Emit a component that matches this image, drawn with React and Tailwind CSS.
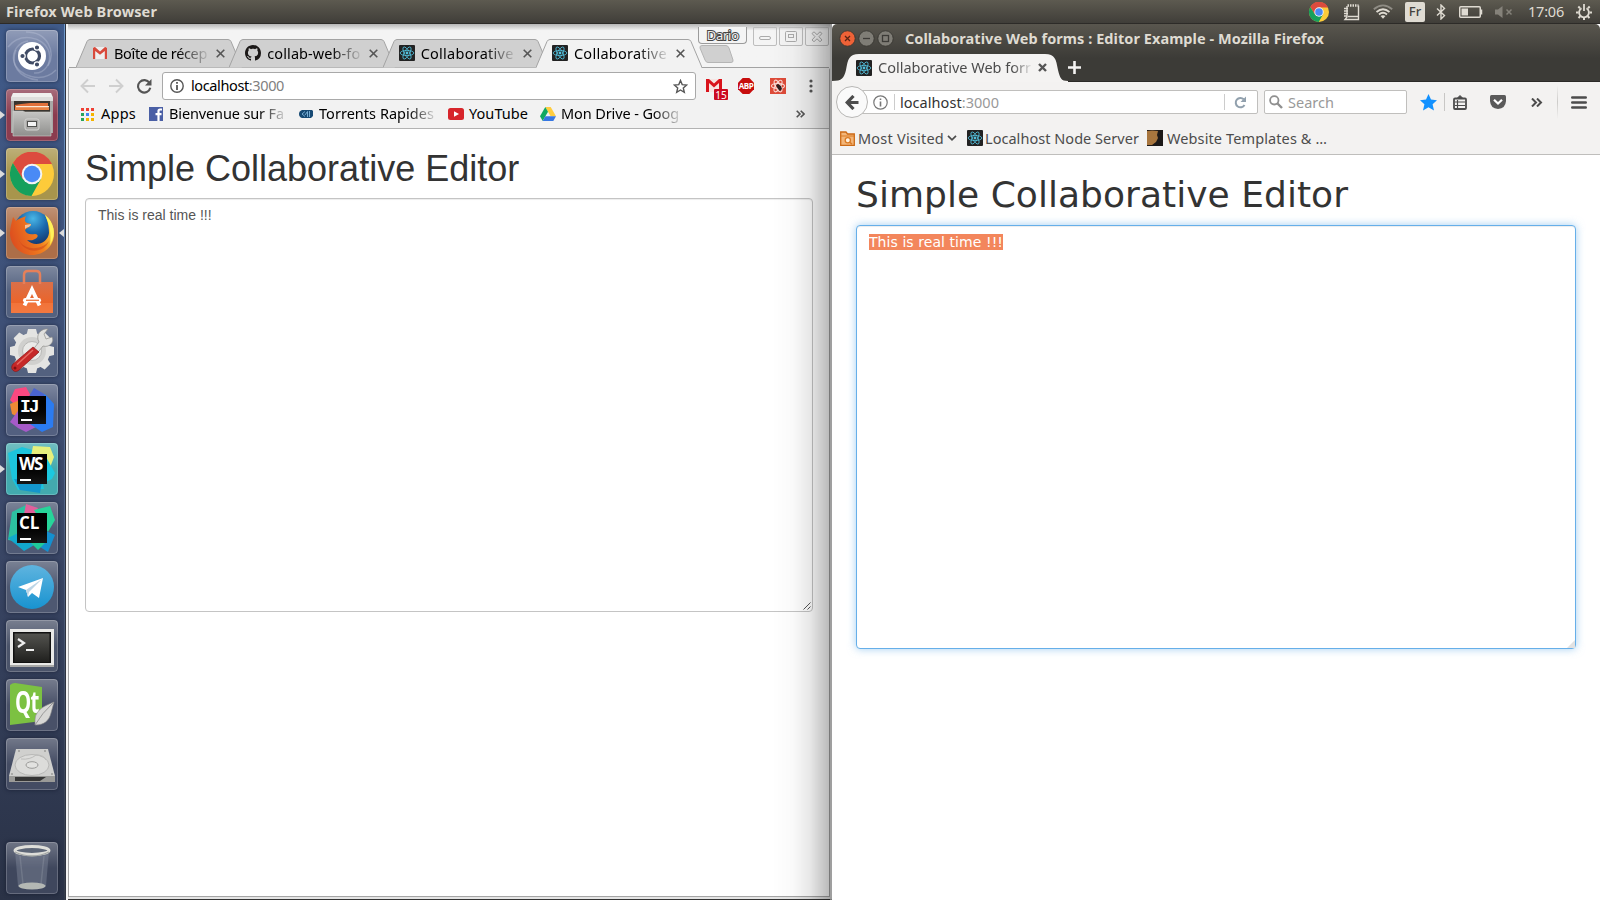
import { useLayoutEffect, useRef } from "react";

// Single line of text whose letter spacing is computed so that it fills `w` pixels.
function Fit({ w, className = "", children }) {
  const ref = useRef(null);
  useLayoutEffect(() => {
    const el = ref.current;
    el.style.letterSpacing = "0px";
    const n = el.textContent.length;
    const natural = el.getBoundingClientRect().width;
    el.style.letterSpacing = (w - natural) / n + "px";
  }, [w]);
  return (
    <span ref={ref} className={"inline-block shrink-0 whitespace-pre " + className}>
      {children}
    </span>
  );
}

function ReactLogo() {
  return (
    <svg width="16" height="16" viewBox="0 0 16 16" className="shrink-0">
      <rect width="16" height="16" rx="1" fill="#222" />
      <g fill="none" stroke="#53c1de" strokeWidth="0.8">
        <ellipse cx="8" cy="8" rx="6.8" ry="2.6" />
        <ellipse cx="8" cy="8" rx="6.8" ry="2.6" transform="rotate(60 8 8)" />
        <ellipse cx="8" cy="8" rx="6.8" ry="2.6" transform="rotate(120 8 8)" />
      </g>
      <circle cx="8" cy="8" r="1.4" fill="#53c1de" />
    </svg>
  );
}

function ChromeLogo({ size }) {
  return (
    <svg width={size} height={size} viewBox="0 0 44 44" className="shrink-0">
      <circle cx="22" cy="22" r="22" fill="#fdcb3a" />
      <path d="M2.9 11A22 22 0 0 1 42 12H22L12.5 27Z" fill="#dc4b3e" />
      <path d="M2.9 11A22 22 0 0 0 21.500 44L31 27L22 31L12.800 27Z" fill="#16a05c" />
      <circle cx="22" cy="22" r="10.300" fill="#f4f4f4" />
      <circle cx="22" cy="22" r="8.300" fill="#4a8af5" />
    </svg>
  );
}

/* ---------- launcher ---------- */

function DashArt() {
  return (
    <svg width="52" height="52" viewBox="0 0 52 52">
      <g fill="none" stroke="#c9d2e6" strokeOpacity=".3" strokeWidth="1.500">
        <path d="M2 17C14 2 38 6 43 22C46 34 38 44 28 43" />
        <path d="M50 40C36 54 12 46 8 32C5 20 14 12 22 11" />
        <path d="M20 2C42 2 50 22 42 36M32 50C12 48 4 34 10 20" />
      </g>
      <circle cx="26" cy="26" r="14" fill="#fff" />
      <circle cx="26.500" cy="26" r="7" fill="none" stroke="#404b64" strokeWidth="3.200" />
      <g fill="#404b64" stroke="#fff" strokeWidth="1.200">
        <circle cx="16.500" cy="26" r="2.700" />
        <circle cx="31" cy="17.500" r="2.700" />
        <circle cx="31" cy="34.500" r="2.700" />
      </g>
    </svg>
  );
}

function FilesArt() {
  return (
    <svg width="52" height="52" viewBox="0 0 52 52">
      <defs>
        <linearGradient id="fl" x2="0" y2="1">
          <stop stopColor="#c6c6c4" />
          <stop offset="1" stopColor="#8f8f8d" />
        </linearGradient>
      </defs>
      <path d="M7 4H45L47 8V44H5V8Z" fill="#a9a9a7" />
      <path d="M7 4H45L47 9H5Z" fill="#f0f0ee" />
      <rect x="5" y="8" width="42" height="4" fill="#dededc" />
      <rect x="8" y="12" width="36" height="11" fill="#39352f" />
      <path d="M15 15L24 14L42 14V21H9V16Z" fill="#e0703a" />
      <path d="M10 17H43V18.500H10Z" fill="#fbe9d6" />
      <path d="M9 18.500H43V21H9Z" fill="#e88345" />
      <path d="M7 22H17L19 23H45V47H7Z" fill="url(#fl)" stroke="#d0d0ce" strokeWidth=".6" />
      <rect x="19" y="30" width="14" height="11" rx="2" fill="#aaa9a7" stroke="#d4d4d2" />
      <rect x="21.500" y="32.500" width="9" height="5" fill="#f4f4f4" stroke="#50504e" />
    </svg>
  );
}

function ChromeArt() {
  return (
    <div className="flex h-[52px] w-[52px] items-center justify-center">
      <ChromeLogo size={44} />
    </div>
  );
}

function FirefoxArt() {
  return (
    <svg width="52" height="52" viewBox="0 0 52 52">
      <defs>
        <radialGradient id="ffb" cx=".5" cy=".2" r=".8">
          <stop stopColor="#49b6e6" />
          <stop offset=".45" stopColor="#1b69ad" />
          <stop offset="1" stopColor="#12285c" />
        </radialGradient>
        <linearGradient id="ffo" x1="0" x2="1" y1=".5" y2=".2">
          <stop stopColor="#dd4f1f" />
          <stop offset=".6" stopColor="#f1801f" />
          <stop offset="1" stopColor="#ffe53e" />
        </linearGradient>
      </defs>
      <circle cx="27" cy="23" r="19" fill="url(#ffb)" />
      <path d="M39 8C45 13 48 20 48 27C48 39 38 48 26 48C14 48 4 38 4 26C4 20 6 15 7 10L10 14C13 11 16 11 20 9C18 13 19 15 21 16L25 17C25 20 22 20 19 23C20 27 24 28 29 27C33 27 32 31 29 32C26 34 24 33 21 33C29 41 42 36 43 26C43 18 41 12 39 8Z" fill="url(#ffo)" />
      <path d="M12 31C16 43 34 45 43 34C38 47 18 48 12 31Z" fill="#c63a18" opacity=".45" />
      <path d="M39 8C48 15 51 27 44 38C46 27 43 16 39 8Z" fill="#fff15a" />
      <path d="M19 18L25 17C25 20 21 20 19 22Z" fill="#f3c49c" />
    </svg>
  );
}

function SoftwareArt() {
  return (
    <svg width="52" height="52" viewBox="0 0 52 52">
      <defs>
        <linearGradient id="bag" x2="0" y2="1">
          <stop stopColor="#d9704a" />
          <stop offset=".7" stopColor="#ec6428" />
          <stop offset="1" stopColor="#f0743c" />
        </linearGradient>
      </defs>
      <path d="M5 16H47V47H5Z" fill="url(#bag)" />
      <path d="M5 37H47V47H5Z" fill="#f47b42" opacity=".7" />
      <path d="M18 18V9Q18 5 22 5H30Q34 5 34 9V18" fill="none" stroke="#e5805a" strokeWidth="2.500" />
      <path d="M18.500 39.500L26 23.500L33.500 39.500" fill="none" stroke="#fff" strokeWidth="3.800" />
      <rect x="17" y="32" width="18" height="4.500" rx="2.200" fill="#fff" />
      <rect x="20" y="33.700" width="13" height="1.100" fill="#e8601f" />
    </svg>
  );
}

function SettingsArt() {
  return (
    <svg width="52" height="52" viewBox="0 0 52 52">
      <g fill="#e4e4e2">
        {[0, 45, 90, 135].map((a) => (
          <path key={a} d="M22 4H30L32 12V40L30 48H22L20 40V12Z" transform={"rotate(" + a + " 26 26)"} />
        ))}
        <circle cx="26" cy="26" r="18" />
      </g>
      <circle cx="26" cy="26" r="14" fill="#d0d0ce" />
      <circle cx="26" cy="26" r="9.500" fill="#eaeae8" stroke="#b8b8b6" />
      <path d="M25 27L33 17C29 10 35 3 42 4L38 9L40 14L46 12C49 17 43 23 37 21L29 31Z" fill="#e0e0de" stroke="#8f8f8d" strokeWidth=".7" />
      <path d="M27 22L33 27L13 45C9 49 3 44 7 39Z" fill="#c62828" stroke="#8e1414" strokeWidth=".7" />
      <path d="M27 25L11 39.500" stroke="#e66a62" strokeWidth="1.500" />
      <circle cx="9" cy="43" r="1.500" fill="#7f1010" />
    </svg>
  );
}

function IdeText({ children, box }) {
  return (
    <div className={"absolute bg-gradient-to-b from-black to-[#161616] " + box}>
      <span className="absolute left-[2px] top-[1px] whitespace-nowrap font-['Open_Sans',sans-serif] text-[17px] font-bold leading-[18px] text-white">{children}</span>
      <span className="absolute bottom-[3px] left-[3px] h-[2px] w-[11px] bg-white" />
    </div>
  );
}

function IntellijArt() {
  return (
    <>
      <svg width="52" height="52" viewBox="0 0 52 52">
        <path d="M9 5L20 3L26 14L14 26L4 16Z" fill="#fb4880" />
        <path d="M4 20L14 16V34L6 30Z" fill="#ee8a35" />
        <path d="M4 38L14 24L32 42L20 48L12 44Z" fill="#a65ac8" />
        <path d="M30 6L40 11L48 20L47 43L36 48L24 40L26 12Z" fill="#2b7bf0" />
        <path d="M28 4L38 10V26L22 14Z" fill="#4a63cf" />
      </svg>
      <IdeText box="left-[12px] top-[12px] h-[28px] w-[28px]">
        <span className="font-['Liberation_Mono',monospace] text-[18px] tracking-[-2px]">IJ</span>
      </IdeText>
    </>
  );
}

function WebstormArt() {
  return (
    <>
      <svg width="52" height="52" viewBox="0 0 52 52">
        <path d="M2 10L16 4L30 8L38 46L12 47L6 36Z" fill="#1cc4dc" />
        <path d="M27 3L44 4L48 14L42 30L24 18Z" fill="#e6f07c" />
        <path d="M40 14L49 30L46 36L38 40Z" fill="#1cc8e0" />
        <path d="M8 36L36 38L34 50L14 47Z" fill="#1496cc" />
      </svg>
      <IdeText box="left-[11px] top-[11px] h-[30px] w-[30px]">
        <span className="tracking-[-1.5px]">WS</span>
      </IdeText>
    </>
  );
}

function ClionArt() {
  return (
    <>
      <svg width="52" height="52" viewBox="0 0 52 52">
        <path d="M2 38L6 10L20 3L28 12L14 40Z" fill="#2cc0a0" />
        <path d="M20 2L32 6L28 14L18 12Z" fill="#e0609c" />
        <path d="M28 8L44 4L49 18L42 30Z" fill="#27d49a" />
        <path d="M38 28L49 33L42 50L26 40Z" fill="#1490d0" />
        <path d="M2 36L14 30L30 42L18 49Z" fill="#12a8cc" />
        <path d="M24 40L40 40L32 48Z" fill="#1fca9a" />
      </svg>
      <IdeText box="left-[11px] top-[11px] h-[30px] w-[30px]">CL</IdeText>
    </>
  );
}

function TelegramArt() {
  return (
    <svg width="52" height="52" viewBox="0 0 52 52">
      <defs>
        <linearGradient id="tg" x2="0" y2="1">
          <stop stopColor="#5fb4df" />
          <stop offset="1" stopColor="#1893d0" />
        </linearGradient>
      </defs>
      <circle cx="26" cy="26" r="22" fill="url(#tg)" />
      <path d="M12 26L37 17L33 37L26 32L22 36L20 29Z" fill="#fff" />
      <path d="M20 29L36 18L23 31L22 36Z" fill="#bcd5e6" />
    </svg>
  );
}

function TerminalArt() {
  return (
    <svg width="52" height="52" viewBox="0 0 52 52">
      <defs>
        <linearGradient id="tm" x2="0" y2="1">
          <stop stopColor="#53534f" />
          <stop offset=".5" stopColor="#3a3a37" />
          <stop offset="1" stopColor="#20201e" />
        </linearGradient>
      </defs>
      <path d="M4 9H48V46H4Z" fill="#e9e9e7" />
      <path d="M4 45H48V47H4Z" fill="#a9a9a7" />
      <rect x="7" y="12" width="38" height="31" fill="#111" />
      <rect x="8.500" y="13.500" width="35" height="28.500" fill="url(#tm)" />
      <path d="M12 19L18 23L12 27" fill="none" stroke="#eee" strokeWidth="2.200" />
      <path d="M20 30H28" stroke="#eee" strokeWidth="2.200" />
    </svg>
  );
}

function QtArt() {
  return (
    <>
      <svg width="52" height="52" viewBox="0 0 52 52">
        <path d="M4 6Q6 4 9 4L36 8V42L4 46Z" fill="#7cc142" />
      </svg>
      <span className="absolute left-[9px] top-[8px] origin-left scale-x-[.68] font-['Open_Sans',sans-serif] text-[30px] font-bold leading-[30px] tracking-[-1px] text-white">Qt</span>
      <svg width="52" height="52" viewBox="0 0 52 52" className="absolute inset-0">
        <path d="M48 23C44 25 29 29 29 41V46C38 46 43 42 45 34Z" fill="#d7d7d5" stroke="#8c8c8a" strokeWidth=".6" />
        <path d="M47 24Q36 34 29 46" fill="none" stroke="#888" strokeWidth=".8" />
      </svg>
    </>
  );
}

function DiskArt() {
  return (
    <svg width="52" height="52" viewBox="0 0 52 52">
      <path d="M10 11H42L49 38V44H3V38Z" fill="#d0d0ce" />
      <path d="M3 38H49V44H3Z" fill="#9a9a98" />
      <path d="M9 39H40L34 43H9Z" fill="#353535" />
      <ellipse cx="26" cy="27" rx="17" ry="10.500" fill="#dcdcda" stroke="#b8b8b6" />
      <path d="M15 21Q24 22 30 17Q38 17 40 22" fill="none" stroke="#bcbcba" />
      <ellipse cx="26" cy="27" rx="6" ry="3.300" fill="#e2e2e0" stroke="#9a9a98" />
      <g fill="#777">
        <circle cx="13" cy="13" r=".8" />
        <circle cx="39" cy="13" r=".8" />
        <circle cx="6" cy="36" r=".8" />
        <circle cx="46" cy="36" r=".8" />
      </g>
    </svg>
  );
}

function TrashArt() {
  return (
    <svg width="52" height="52" viewBox="0 0 52 52">
      <path d="M9 9H43L40 44Q26 50 12 44Z" fill="#8b94a6" fillOpacity=".38" />
      <path d="M14 14L17 42M38 14L35 42" stroke="#c8ccd4" strokeOpacity=".18" strokeWidth="1.500" />
      <ellipse cx="26" cy="44" rx="13.500" ry="3.500" fill="#b4b8b4" />
      <ellipse cx="26" cy="8.500" rx="17" ry="4" fill="#5d6677" stroke="#deded9" strokeWidth="3" />
      <path d="M9 10Q26 18 43 10" fill="none" stroke="#a2a6a4" strokeWidth="1.300" />
    </svg>
  );
}

const LAUNCHER = [
  { id: "dash", art: DashArt, bg: "bg-[#6c7ba0]" },
  { id: "files", art: FilesArt, bg: "bg-[#8b3c4f]", run: true },
  { id: "chrome", art: ChromeArt, bg: "bg-[#a8954c]", run: true },
  { id: "firefox", art: FirefoxArt, bg: "bg-[#ac6e48]", run: true, focus: true },
  { id: "software", art: SoftwareArt, bg: "bg-[#53617f]" },
  { id: "settings", art: SettingsArt, bg: "bg-[#53617f]" },
  { id: "idea", art: IntellijArt, bg: "bg-[#536080]" },
  { id: "webstorm", art: WebstormArt, bg: "bg-[#43aaae]", run: true },
  { id: "clion", art: ClionArt, bg: "bg-[#4f5a75]" },
  { id: "telegram", art: TelegramArt, bg: "bg-[#4e5871]" },
  { id: "terminal", art: TerminalArt, bg: "bg-[#4b546a]" },
  { id: "qt", art: QtArt, bg: "bg-[#495168]" },
  { id: "disk", art: DiskArt, bg: "bg-[#444c63]" },
];

function Tile({ item }) {
  const Art = item.art;
  return (
    <div className="relative h-[52px] w-full shrink-0 pl-[6px]">
      <div className={"relative h-[52px] w-[52px] overflow-hidden rounded-[4px] shadow-[0_0_4px_rgba(10,15,35,.55)] " + item.bg}>
        <div className="absolute inset-0 bg-gradient-to-b from-white/25 via-transparent to-transparent" />
        <div className="absolute inset-0">
          <Art />
        </div>
        <div className="absolute inset-0 rounded-[4px] border border-white/20" />
      </div>
      {item.run && (
        <svg width="5" height="8" className="absolute left-0 top-[22px]">
          <path d="M0 0L5 4L0 8Z" fill="#dcdcdc" />
        </svg>
      )}
      {item.focus && (
        <svg width="5" height="8" className="absolute left-[59px] top-[22px]">
          <path d="M5 0L0 4L5 8Z" fill="#dcdcdc" />
        </svg>
      )}
    </div>
  );
}

function Launcher() {
  return (
    <div className="flex w-[66px] shrink-0 border-r border-[#2e3340] bg-gradient-to-b from-[#405b8a] via-[#3d4b6d] to-[#2a3246]">
      <div className="flex w-[64px] flex-col gap-[7px] pt-[6px]">
        {LAUNCHER.map((i) => (
          <Tile key={i.id} item={i} />
        ))}
        <div className="mt-[45px]">
          <Tile item={{ art: TrashArt, bg: "bg-[#3f475d]" }} />
        </div>
      </div>
      <div className="w-px bg-gradient-to-b from-[#6f9acb] via-[#566b90] to-[#343b4a]" />
    </div>
  );
}

/* ---------- top panel ---------- */

function TopBar() {
  return (
    <div className="flex h-6 shrink-0 items-center border-b border-[#2d2b28] bg-gradient-to-b from-[#5d5a50] to-[#403e39] pl-[6px] text-[#dfdbd2]">
      <Fit w={151} className="text-[14.500px] font-bold leading-none">Firefox Web Browser</Fit>
      <div className="ml-auto flex items-center">
        <div className="mr-[14px]"><ChromeLogo size={20} /></div>
        <svg width="17" height="18" viewBox="0 0 17 18" className="mr-[13px]" fill="none" stroke="#dfdbd2" strokeWidth="1.400">
          <path d="M4 3V14L2 16.500H15.500V2.500M5 13.500H15" />
          <path d="M4.500 2.500H15.500" strokeWidth="2.500" strokeDasharray="1.500 1" />
          <path d="M1 5.500H5M1 8H5M1 10.500H5M1 13H4" />
        </svg>
        <svg width="20" height="16" viewBox="0 0 20 16" className="mr-[12px]" fill="none" stroke="#dfdbd2" strokeWidth="1.800">
          <path d="M.8 5.200Q10 -2.500 19.200 5.200" stroke="#8f8c84" />
          <path d="M3.500 8Q10 2.500 16.500 8" />
          <path d="M6 10.500Q10 7 14 10.500" />
          <path d="M7.500 12L10 14.800L12.500 12Q10 10.300 7.500 12Z" fill="#dfdbd2" stroke="none" />
        </svg>
        <div className="mr-[11px] flex h-5 w-5 items-center justify-center rounded-[2px] bg-[#dfdbd2] text-[13px] font-medium leading-none text-[#45433e]">Fr</div>
        <svg width="10" height="16" viewBox="0 0 10 16" className="mr-[13px]" fill="none" stroke="#dfdbd2" strokeWidth="1.400">
          <path d="M1 4.500L8.500 11.500L5 15V1L8.500 4.500L1 11.500" />
        </svg>
        <svg width="24" height="12" viewBox="0 0 24 12" className="mr-[12px]">
          <rect x=".75" y=".75" width="20.500" height="10.500" rx="1" fill="none" stroke="#dfdbd2" strokeWidth="1.500" />
          <path d="M22.500 3.500V8.500" stroke="#dfdbd2" strokeWidth="1.500" />
          <rect x="2.500" y="2.500" width="6.500" height="7" fill="#dfdbd2" />
        </svg>
        <svg width="18" height="12" viewBox="0 0 18 12" className="mr-[15px]">
          <path d="M0 3.500H3L7.500 0V12L3 8.500H0Z" fill="#85827a" />
          <path d="M11.500 3.500L16.500 8.500M16.500 3.500L11.500 8.500" stroke="#85827a" strokeWidth="1.500" />
        </svg>
        <Fit w={36} className="mr-[12px] text-[14.500px] leading-none">17:06</Fit>
        <svg width="16" height="16" viewBox="0 0 16 16" className="mr-[8px]" fill="none" stroke="#dfdbd2">
          <path d="M5.500 4.200A4.900 4.900 0 1 0 10.500 4.200" strokeWidth="1.800" />
          <path d="M8 0V7" strokeWidth="1.800" />
          <path d="M0 8.500H2.500M13.500 8.500H16M2.300 2.500L4 4.200M13.700 2.500L12 4.200M2.500 14L4.200 12.300M13.500 14L11.800 12.300M8 13V16" strokeWidth="2" />
        </svg>
      </div>
    </div>
  );
}

/* ---------- left browser ---------- */

function GmailIcon() {
  return (
    <svg width="14" height="12" viewBox="0 0 14 12" className="mx-px shrink-0">
      <rect width="14" height="12" rx="1" fill="#eee" />
      <path d="M0 1V12H2.200V4L7 7.700L11.800 4V12H14V1Q13 0 12 0L7 4.500L2 0Q1 0 0 1Z" fill="#d84a3c" />
    </svg>
  );
}

function GithubIcon() {
  return (
    <svg width="16" height="16" viewBox="0 0 16 16" className="shrink-0">
      <path fill="#1b1817" d="M8 0C3.580 0 0 3.580 0 8c0 3.540 2.290 6.530 5.470 7.590.4.070.55-.17.55-.38 0-.19-.01-.82-.01-1.490-2.010.37-2.530-.49-2.690-.94-.09-.23-.48-.94-.82-1.130-.28-.15-.68-.52-.01-.53.63-.01 1.080.58 1.230.82.72 1.210 1.870.87 2.330.66.07-.52.28-.87.51-1.070-1.780-.2-3.640-.89-3.640-3.950 0-.87.31-1.590.82-2.150-.08-.2-.36-1.020.08-2.120 0 0 .67-.21 2.200.82.64-.18 1.320-.27 2-.27s1.360.09 2 .27c1.530-1.040 2.200-.82 2.200-.82.44 1.100.16 1.920.08 2.120.51.56.82 1.270.82 2.150 0 3.070-1.870 3.750-3.650 3.950.29.25.54.73.54 1.480 0 1.070-.01 1.930-.01 2.200 0 .21.15.46.55.38A8.010 8.010 0 0 0 16 8c0-4.420-3.580-8-8-8Z" />
    </svg>
  );
}

function ChromeTab({ icon, title, active, z }) {
  return (
    <div className={"relative -mr-[12.700px] h-[29px] w-[166px] shrink-0 " + z}>
      <svg width="166" height="29" className="absolute inset-0">
        <path d="M0 28.500L11 2.500Q12 .5 14 .5H152Q154 .5 155 2.500L166 28.500" fill={active ? "#f2f2f2" : "#d0d0d0"} stroke="#a3a3a3" />
        {active && <path d="M.8 28.500H165.200" stroke="#f2f2f2" />}
      </svg>
      <div className="relative flex h-[28px] items-center pl-[16px]">
        {icon}
        <div className="ml-[6px] w-[94px] [mask-image:linear-gradient(to_right,#000_68%,rgba(0,0,0,.08))]">
          <Fit w={93}>{title}</Fit>
        </div>
        <svg width="9" height="9" viewBox="0 0 9 9" className="ml-[8px]" stroke="#555" strokeWidth="1.600">
          <path d="M.7 .7L8.300 8.300M8.300 .7L.7 8.300" />
        </svg>
      </div>
    </div>
  );
}

function WinButton({ children }) {
  return (
    <div className="flex h-[19px] w-[24px] items-center justify-center rounded-b-[2px] border border-[#bdbdbd]">
      <svg width="14" height="12" viewBox="0 0 14 12" fill="none" stroke="#aaa">{children}</svg>
    </div>
  );
}

function Bookmark({ icon, gap, w, children, fade }) {
  return (
    <div className={"flex shrink-0 items-center " + gap}>
      {icon}
      <div className={"pb-[2px] " + (fade ? "[mask-image:linear-gradient(to_right,#000_78%,rgba(0,0,0,.15))]" : "")}>
        <Fit w={w}>{children}</Fit>
      </div>
    </div>
  );
}

function ChromeWindow() {
  return (
    <div className="relative flex w-[766px] shrink-0 flex-col bg-[#f4f4f4] pl-[2px] text-[14.500px] leading-[20px] text-black">
      <div className="flex h-[44px] shrink-0 bg-gradient-to-b from-[#b5b5b5] via-[#f4f4f4] via-15% to-[#f4f4f4]">
        <div className="flex pl-[8px] pt-[15px]">
          <ChromeTab z="z-0" icon={<GmailIcon />} title="Boîte de récep" />
          <ChromeTab z="z-0" icon={<GithubIcon />} title="collab-web-fo" />
          <ChromeTab z="z-0" icon={<ReactLogo />} title="Collaborative" />
          <ChromeTab z="z-20" active icon={<ReactLogo />} title="Collaborative" />
          <svg width="36" height="19" className="ml-[10px] mt-[6px]">
            <path d="M3 .5H27Q29 .5 30 3L34 15Q34.500 17.500 32 17.500H9Q7 17.500 6 15L1 3Q.5 .5 3 .5Z" fill="#d0d0d0" stroke="#b5b5b5" />
          </svg>
        </div>
        <div className="-ml-[37px] flex items-start gap-[2px] pt-[3px]">
          <div className="mr-[4px] flex h-[17px] w-[49px] items-center justify-center rounded-b-[4px] border border-t-0 border-[#9b9b9b] bg-[#f4f4f4]">
            <Fit w={32} className="text-[13px] leading-none text-[#eee] [-webkit-text-stroke:2px_#444] [paint-order:stroke_fill]">Dario</Fit>
          </div>
          <WinButton><rect x="1.500" y="5.500" width="11" height="3" rx="1.500" /></WinButton>
          <WinButton>
            <rect x="1.500" y=".5" width="11" height="10" rx="1" />
            <rect x="4.500" y="3.500" width="5" height="3" />
          </WinButton>
          <WinButton><path d="M2 2.500L4 .8L7 3.700L10 .8L12 2.500L9 5.700L12 9L10 10.700L7 7.800L4 10.700L2 9L5 5.700Z" /></WinButton>
        </div>
      </div>

      <div className="mr-[2px] flex min-h-0 flex-1 flex-col rounded-t-[2px] border-x border-b border-[#a5a5a5] bg-white">
        <div className="-mt-px flex h-[35px] shrink-0 items-center border-t border-[#a3a3a3] bg-[#f2f2f2] pl-[11px] pt-[2px]">
          <svg width="72" height="16" viewBox="0 0 72 16" fill="none" strokeWidth="1.900" className="mr-[10px]">
            <g stroke="#cfcfcf">
              <path d="M15 8H2M8 1.500L1.500 8L8 14.500" />
              <path d="M29 8H42M36 1.500L42.500 8L36 14.500" />
            </g>
            <path d="M69.500 5A6.200 6.200 0 1 0 70.300 9.800" stroke="#555" strokeWidth="2.100" />
            <path d="M71.500 1V7.500H65Z" fill="#555" />
          </svg>
          <div className="flex h-[28px] w-[534px] items-center rounded-[3px] border border-[#a9a9a9] bg-white pl-[7px] pr-[7px]">
            <svg width="14" height="14" viewBox="0 0 14 14" className="mr-[7px]">
              <circle cx="7" cy="7" r="6.200" fill="none" stroke="#555" strokeWidth="1.400" />
              <path d="M7 6V11M7 3V4.800" stroke="#555" strokeWidth="1.800" />
            </svg>
            <Fit w={93} className="mb-[2px]">localhost<span className="text-[#808080]">:3000</span></Fit>
            <svg width="15" height="15" viewBox="0 0 15 15" className="ml-auto" fill="none" stroke="#555" strokeWidth="1.400">
              <path d="M7.500 1.500L9.200 5.600L13.700 6L10.300 8.900L11.300 13.300L7.500 11L3.700 13.300L4.700 8.900L1.300 6L5.800 5.600Z" />
            </svg>
          </div>
          <div className="relative ml-[10px] mt-[8px] h-[22px] w-[22px]">
            <svg width="16" height="13" viewBox="0 0 16 13">
              <rect width="16" height="13" rx="1" fill="#f7e4e2" />
              <path d="M0 0H3L8 4.500L13 0H16V13H13V4L8 8.500L3 4V13H0Z" fill="#d9141c" />
            </svg>
            <span className="absolute left-[8px] top-[10px] flex h-[11px] w-[14px] items-center justify-center rounded-[1px] bg-[#cc0a20] text-[10px] leading-none text-white">15</span>
          </div>
          <div className="relative ml-[10px] flex h-4 w-4 items-center justify-center">
            <svg width="16" height="16" className="absolute inset-0"><path d="M4.700 0H11.300L16 4.700V11.300L11.300 16H4.700L0 11.300V4.700Z" fill="#c70d0d" /></svg>
            <span className="relative font-['Open_Sans',sans-serif] text-[8px] font-bold leading-none tracking-[-.5px] text-white">ABP</span>
          </div>
          <svg width="16" height="16" viewBox="0 0 16 16" className="ml-[16px]">
            <rect width="16" height="16" fill="#dd4b39" />
            <g fill="none" stroke="#fbdcd7" strokeWidth="1.100">
              <ellipse cx="8" cy="8" rx="6.500" ry="2.500" />
              <ellipse cx="8" cy="8" rx="6.500" ry="2.500" transform="rotate(60 8 8)" />
              <ellipse cx="8" cy="8" rx="6.500" ry="2.500" transform="rotate(120 8 8)" />
            </g>
            <path d="M6 7L8 6L11 8L12 11L10 13L8 11Z" fill="#2b2020" />
          </svg>
          <svg width="4" height="14" className="ml-[22.500px]" fill="#555">
            <circle cx="2" cy="2" r="1.600" />
            <circle cx="2" cy="7" r="1.600" />
            <circle cx="2" cy="12" r="1.600" />
          </svg>
        </div>
        <div className="flex h-[27px] shrink-0 items-center border-b border-[#b3b3b3] bg-[#f2f2f2] pb-[2px] pl-[12px]">
          <Bookmark w={35} icon={
            <svg width="13" height="13" className="mr-[7px]">
              <path d="M0 0h3v3h-3zM5 0h3v3h-3zM10 0h3v3h-3z" fill="#ee3f34" />
              <path d="M0 5h3v3h-3zM0 10h3v3h-3z" fill="#27a45c" />
              <path d="M5 5h3v3h-3z" fill="#4285f4" />
              <path d="M10 5h3v3h-3zM5 10h3v3h-3zM10 10h3v3h-3z" fill="#f5b400" />
            </svg>
          }>Apps</Bookmark>
          <Bookmark gap="ml-[13px]" w={115} fade icon={
            <svg width="14" height="14" className="mr-[6px]">
              <rect width="14" height="14" fill="#4a5fa5" />
              <path d="M13 2.500H11Q9.500 2.500 9.500 4V14M6.500 7.200H12.500" fill="none" stroke="#fff" strokeWidth="2.200" />
            </svg>
          }>Bienvenue sur Fa</Bookmark>
          <Bookmark gap="ml-[15px]" w={115} fade icon={
            <svg width="14" height="10" viewBox="0 0 14 10" className="mr-[6px]">
              <path d="M3 1H13L14 2V7L12 9H3Q0 8 0 5Q0 2 3 1Z" fill="#174a74" />
              <path d="M6 2.500L3 5L6 7.500M6 6L8.500 2.500V8M10.500 2V8" fill="none" stroke="#7fb6dc" strokeWidth=".9" />
            </svg>
          }>Torrents Rapides</Bookmark>
          <Bookmark gap="ml-[14px]" w={59} icon={
            <svg width="16" height="12" className="mr-[5px]">
              <rect width="16" height="12" rx="2.500" fill="#d7252b" />
              <path d="M6 3.300L11 6L6 8.700Z" fill="#fff" />
            </svg>
          }>YouTube</Bookmark>
          <Bookmark gap="ml-[12px]" w={118} fade icon={
            <svg width="16" height="14" className="mr-[5px]">
              <path d="M5.300 0H10.700L16 9.300H10.600Z" fill="#ffcd40" />
              <path d="M5.300 0L8 4.700L2.700 14L0 9.300Z" fill="#11a861" />
              <path d="M5.400 9.300H16L13.300 14H2.700Z" fill="#3777e3" />
            </svg>
          }>Mon Drive - Goog</Bookmark>
          <svg width="9" height="8" className="ml-[117px]" fill="none" stroke="#555" strokeWidth="1.600">
            <path d="M.7 .7L4 4L.7 7.300M4.700 .7L8 4L4.700 7.300" />
          </svg>
        </div>
        <div className="flex flex-1 flex-col pl-[16px] pt-[20px] font-['Liberation_Sans',Arial,sans-serif]">
          <h1 className="h-[39px] whitespace-nowrap text-[36px] font-normal leading-[39px] text-[#333]">Simple Collaborative Editor</h1>
          <div className="relative mt-[10px] h-[414px] w-[728px] rounded-[4px] border border-[#c4c4c4] bg-white px-[12px] py-[6px] text-[14px] leading-[20px] text-[#555] shadow-[inset_0_1px_1px_rgba(0,0,0,.075)]">
            This is real time !!!
            <svg width="8" height="8" className="absolute bottom-px right-px" stroke="#555"><path d="M.5 7.500L7.500 .5M4.500 7.500L7.500 4.500" /></svg>
          </div>
        </div>
      </div>
      <div className="h-[3px] shrink-0 border-b border-[#333] bg-[#e4e4e4]" />
      <div className="pointer-events-none absolute bottom-0 right-0 top-0 z-30 w-[60px] border-r-2 border-[#8a8a8a]/80 bg-[linear-gradient(to_right,transparent,rgba(0,0,0,.02)_35%,rgba(0,0,0,.09)_65%,rgba(0,0,0,.28))]" />
    </div>
  );
}

/* ---------- right browser ---------- */

function TitleButton({ red, children }) {
  return (
    <svg width="17" height="17" viewBox="0 0 17 17" fill="none" stroke={red ? "#5a2414" : "#3c3b37"} strokeWidth="1.300">
      <circle cx="8.500" cy="8.500" r="7.700" fill={red ? "#ee6237" : "#7f7d76"} stroke="#35342f" strokeWidth=".8" />
      {children}
    </svg>
  );
}

function FirefoxWindow() {
  return (
    <div className="flex min-w-0 flex-1 flex-col bg-white text-[14.500px] leading-[20px] text-[#4c4c4c]">
      <div className="flex h-[58px] shrink-0 flex-col rounded-t-[5px] border-b border-[#2b2a27] bg-gradient-to-b from-[#59564e] to-[#3c3b37] to-60%">
        <div className="flex h-[29px] shrink-0 items-center gap-[2px] pl-[7px]">
          <TitleButton red><path d="M6 6L11 11M11 6L6 11" /></TitleButton>
          <TitleButton><path d="M5 8.500H12" /></TitleButton>
          <TitleButton><rect x="5.500" y="5.500" width="6" height="6" /></TitleButton>
          <Fit w={419} className="mb-[2px] ml-[9px] font-bold text-[#dfdbd2]">Collaborative Web forms : Editor Example - Mozilla Firefox</Fit>
        </div>
        <div className="flex h-[29px] shrink-0">
          <div className="relative h-[29px] w-[236px]">
            <svg width="236" height="29" className="absolute inset-0">
              <path d="M0 29V28C10 28 12 25 14 17C16 6 17 1 27 1H213C223 1 224 6 226 17C228 25 229 28 236 28V29Z" fill="#f4f3f2" />
            </svg>
            <div className="relative flex h-[29px] items-center pl-[24px]">
              <ReactLogo />
              <div className="mb-[2px] ml-[6px] w-[153px] [mask-image:linear-gradient(to_right,#000_88%,rgba(0,0,0,.1))]">
                <Fit w={153}>Collaborative Web forr</Fit>
              </div>
              <svg width="9" height="9" className="ml-[7px]" stroke="#555" strokeWidth="2.400"><path d="M1 1L8 8M8 1L1 8" /></svg>
            </div>
          </div>
          <svg width="13" height="13" className="mt-[8px]" stroke="#f4f3f2" strokeWidth="2.600"><path d="M6.500 0V13M0 6.500H13" /></svg>
        </div>
      </div>
      <div className="flex h-[73px] shrink-0 flex-col border-b border-[#bfbebc] bg-[#f3f2f1]">
        <div className="flex h-[40px] items-center pl-[4px]">
          <div className="z-10 flex h-8 w-8 items-center justify-center rounded-full border border-[#b8b7b5] bg-[#fafafa]">
            <svg width="14" height="15" viewBox="0 0 14 15" fill="none" stroke="#4c4c4c" strokeWidth="3.200"><path d="M13.500 7.500H2.500M8.500 1L2.200 7.500L8.500 14" /></svg>
          </div>
          <div className="-ml-[6px] flex h-[24px] w-[396px] items-center rounded-r-[2px] border border-[#c0bfbd] bg-white pl-[10px]">
            <svg width="15" height="15" viewBox="0 0 15 15">
              <circle cx="7.500" cy="7.500" r="6.700" fill="none" stroke="#777" strokeWidth="1.200" />
              <path d="M7.500 6.500V11.500M7.500 3.500V5" stroke="#777" strokeWidth="1.600" />
            </svg>
            <div className="ml-[6px] mr-[5px] h-4 w-px bg-[#ccc]" />
            <Fit w={99} className="text-[#333]">localhost<span className="text-[#999]">:3000</span></Fit>
            <div className="ml-auto h-4 w-px bg-[#ccc]" />
            <svg width="13" height="13" viewBox="0 0 13 13" className="ml-[9px] mr-[10px]">
              <path d="M9.700 3.200A4.700 4.700 0 1 0 10.500 9" fill="none" stroke="#91a0ad" strokeWidth="2" />
              <path d="M12 .5V6H6.500Z" fill="#91a0ad" />
            </svg>
          </div>
          <div className="ml-[6px] flex h-[24px] w-[143px] items-center rounded-[2px] border border-[#c0bfbd] bg-white pl-[4px] text-[#999]">
            <svg width="14" height="14" viewBox="0 0 14 14" className="mr-[5px]" fill="none" stroke="#8f8f8f">
              <circle cx="5.300" cy="5.300" r="4.200" strokeWidth="1.800" />
              <path d="M8.500 8.500L13 13" strokeWidth="2.400" />
            </svg>
            <Fit w={46}>Search</Fit>
          </div>
          <svg width="17" height="17" viewBox="0 0 17 17" className="ml-[13px]"><path d="M8.500 0L11 5.500L17 6.200L12.600 10.300L14 16.500L8.500 13.300L3 16.500L4.400 10.300L0 6.200L6 5.500Z" fill="#1291ff" /></svg>
          <div className="ml-[7px] h-[18px] w-px bg-[#c8c7c5]" />
          <svg width="14" height="15" viewBox="0 0 14 15" className="ml-[8px]">
            <rect x="1" y="3.500" width="12" height="10.500" rx="1" fill="none" stroke="#4c4c4c" strokeWidth="1.800" />
            <path d="M4 3.500L7 .5L10 3.500Z" fill="#4c4c4c" stroke="#4c4c4c" />
            <path d="M2 7H12M2 10.500H12M4.500 5V13" stroke="#4c4c4c" strokeWidth="1.200" />
          </svg>
          <svg width="16" height="14" viewBox="0 0 16 14" className="ml-[23px]">
            <path d="M1.500 0H14.500Q16 0 16 1.500V6Q15.500 13.500 8 14Q.5 13.500 0 6V1.500Q0 0 1.500 0Z" fill="#5a5a5a" />
            <path d="M4 4.800L8 8.500L12 4.800" fill="none" stroke="#fff" strokeWidth="2.200" />
          </svg>
          <svg width="12" height="9" viewBox="0 0 12 9" className="ml-[25px]" fill="none" stroke="#4c4c4c" strokeWidth="2"><path d="M1 .5L5 4.500L1 8.500M6 .5L10 4.500L6 8.500" /></svg>
          <div className="ml-[14px] h-[34px] w-px bg-gradient-to-b from-transparent via-[#cccbc9] to-transparent" />
          <svg width="16" height="13" className="ml-[13px]" stroke="#4c4c4c" strokeWidth="2.600" strokeLinecap="round"><path d="M1.300 1.500H14.700M1.300 6.500H14.700M1.300 11.500H14.700" /></svg>
        </div>
        <div className="flex h-[32px] items-center pl-[8px]">
          <svg width="15" height="15" viewBox="0 0 15 15" className="mr-[3px]">
            <path d="M.7 14.300V1H6L7.500 3H14.300V14.300Z" fill="#f3b679" stroke="#cc6a16" strokeWidth="1.300" />
            <path d="M1 5H14" stroke="#d97a24" />
            <circle cx="7.800" cy="9.300" r="2.600" fill="#fff2e0" stroke="#d97a24" strokeWidth="1.300" />
            <path d="M9.500 11L12 13.300" stroke="#d97a24" strokeWidth="1.500" />
          </svg>
          <Fit w={86}>Most Visited</Fit>
          <svg width="10" height="6" className="ml-[3px]" fill="none" stroke="#4c4c4c" strokeWidth="1.700"><path d="M1 .8L5 4.800L9 .8" /></svg>
          <div className="ml-[10px] mr-[2px]"><ReactLogo /></div>
          <Fit w={154}>Localhost Node Server</Fit>
          <svg width="16" height="16" className="ml-[8px] mr-[4px]">
            <rect width="16" height="16" fill="#1c1918" />
            <path d="M0 1Q5 0 11 1L10 5L11 8L9 12L5 15H0Z" fill="#a8763e" />
          </svg>
          <Fit w={160}>Website Templates &amp; …</Fit>
        </div>
      </div>
      <div className="flex flex-1 flex-col pl-[24px] pt-[20px] font-['DejaVu_Sans',sans-serif]">
        <h1 className="h-[40px] whitespace-nowrap text-[36px] font-normal leading-[40px] text-[#333]">
          <Fit w={492}>Simple Collaborative Editor</Fit>
        </h1>
        <div className="relative mt-[10px] h-[424px] w-[720px] rounded-[4px] border border-[#66afe9] bg-white px-[12px] py-[6px] text-[14px] leading-[20px] shadow-[inset_0_1px_1px_rgba(0,0,0,.075),0_0_8px_rgba(102,175,233,.6)]">
          <Fit w={134} className="bg-[#f3865c] leading-[16px] text-white">This is real time !!!</Fit>
          <svg width="8" height="8" className="absolute bottom-0 right-0"><path d="M0 8L8 0V8Z" fill="#e2e2e2" /></svg>
        </div>
      </div>
    </div>
  );
}

export default function App() {
  return (
    <div className="flex h-[900px] w-[1600px] flex-col overflow-hidden bg-[#2d2c29] font-['Noto_Sans','Open_Sans',sans-serif]">
      <TopBar />
      <div className="flex min-h-0 flex-1">
        <Launcher />
        <ChromeWindow />
        <FirefoxWindow />
      </div>
    </div>
  );
}
